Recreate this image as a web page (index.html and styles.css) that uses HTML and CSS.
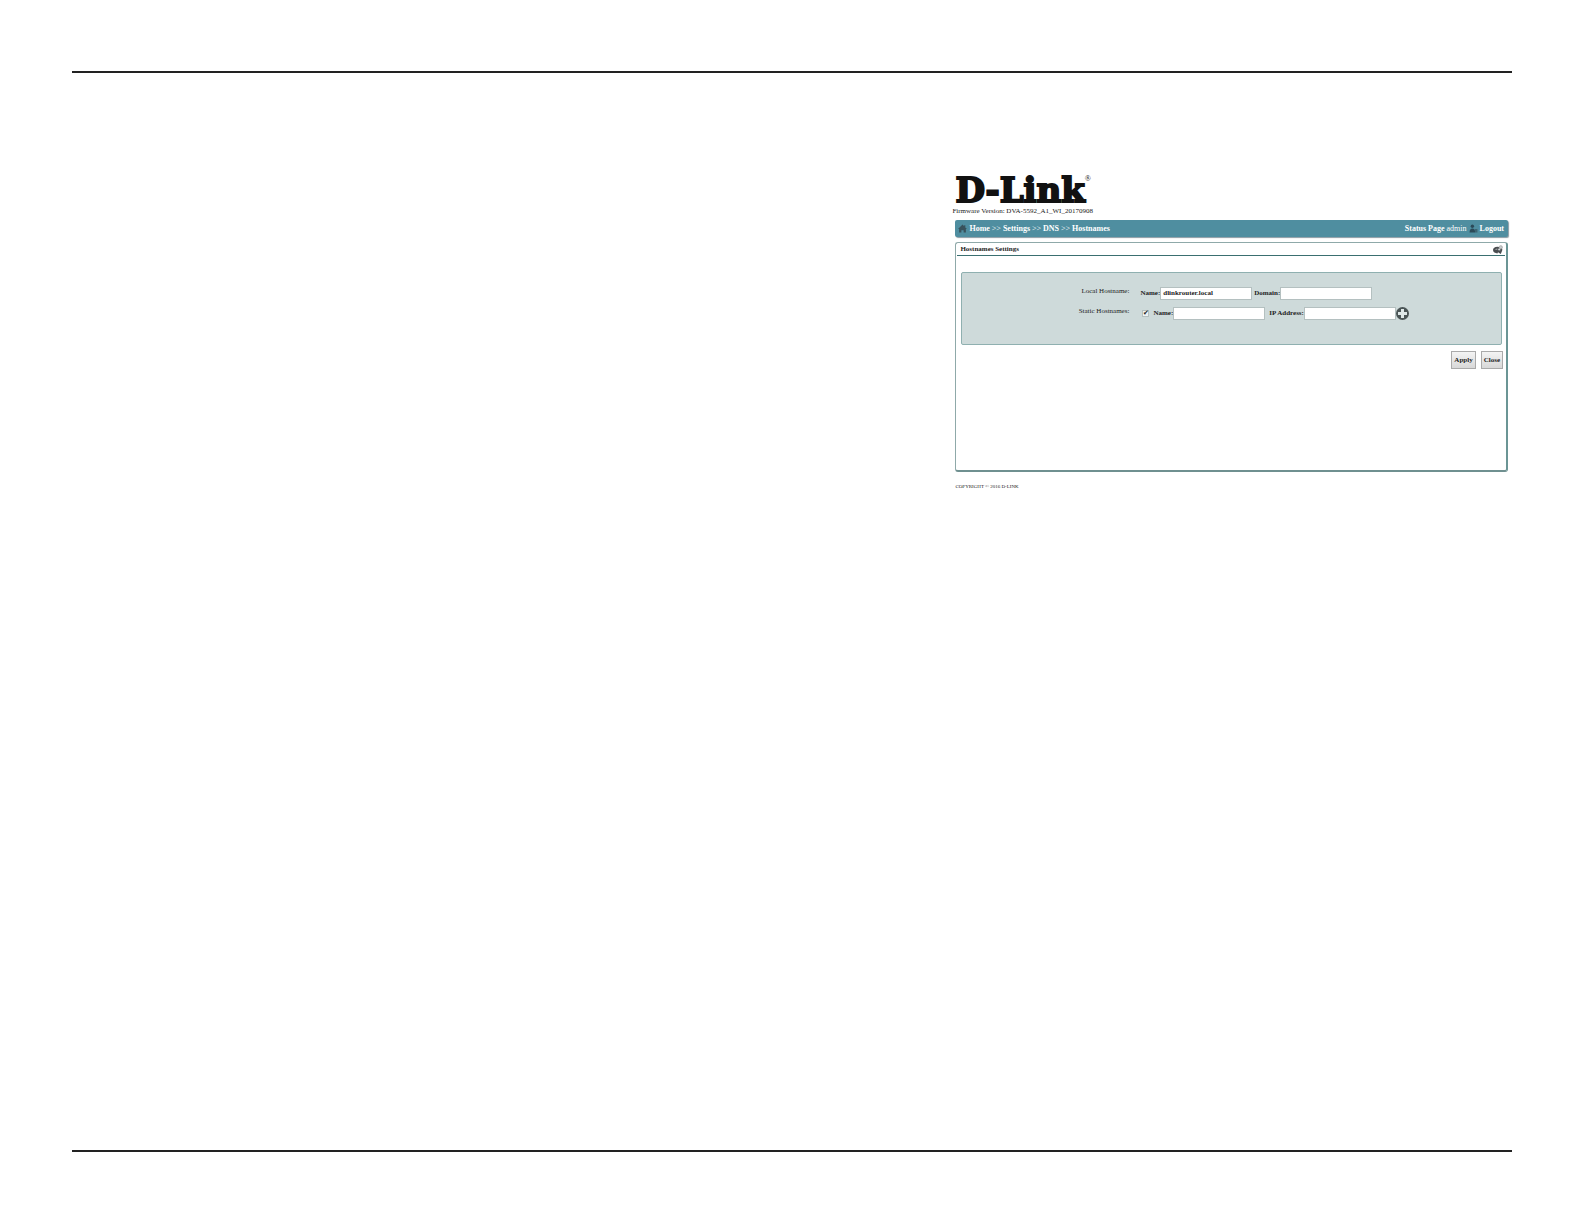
FILE: index.html
```
<!DOCTYPE html>
<html lang="en"><head><meta charset="utf-8"><title>Hostnames Settings</title><meta name="viewport" content="width=device-width, initial-scale=1">
<link rel="stylesheet" href="styles.css">
</head><body>
<main class="sheet">
<div class="screen">
<div class="logo">D-Link<sup>®</sup></div>
<div class="fw">Firmware Version: DVA-5592_A1_WI_20170908</div>
<nav class="bar">
<svg class="ic" viewBox="0 0 16 16"><path d="M8 1L0 9h2v6h4v-4h4v4h4V9h2l-3-3V2h-2v2z" fill="#38525c"/></svg>
<a href="#">Home</a><span>&gt;&gt;</span><a href="#">Settings</a><span>&gt;&gt;</span><a href="#">DNS</a><span>&gt;&gt;</span><a href="#">Hostnames</a>
<div class="user"><a href="#">Status Page</a><span>admin</span>
<svg class="ic" viewBox="0 0 16 16"><circle cx="6" cy="4" r="3" fill="#2b4a58"/><path d="M1 15c0-5 2-7 5-7s5 2 5 7z" fill="#2b4a58"/><path d="M10 9h5v6h-4z" fill="#3d6472"/></svg>
<a href="#">Logout</a></div>
</nav>
<section class="panel">
<div class="title"><h1>Hostnames Settings</h1>
<svg class="ic" viewBox="0 0 18 16"><path d="M8 3C3 3 0 6 0 9c0 4 4 6 8 6l1-2 5 3 2-5c2-3 0-6-2-7z" fill="#4a4d50"/><path d="M4 9c1-3 5-3 6-1l-2 1 5 1V5l-2 1" fill="#d5d8da"/><circle cx="14" cy="4" r="3" fill="#c8cccd" stroke="#999"/></svg></div>
<form>
<div class="box">
<div class="row"><span class="cap">Local Hostname:</span>
<label for="lname">Name:</label><input type="text" id="lname" value="dlinkrouter.local">
<label class="dom" for="domain">Domain:</label><input type="text" id="domain"></div>
<div class="row"><span class="cap">Static Hostnames:</span>
<input type="checkbox" id="on" checked aria-label="Enable static hostname"><label for="sname">Name:</label><input type="text" id="sname">
<label class="ip" for="addr">IP Address:</label><input type="text" id="addr">
<button type="button" class="add" aria-label="Add"><svg viewBox="0 0 26 26"><circle cx="13" cy="13" r="13" fill="#4b5556"/><path d="M10 4h6v6h6v6h-6v6h-6v-6H4v-6h6z" fill="#dfe8e8"/></svg></button></div>
</div>
<div class="btns"><button type="button">Apply</button><button type="button">Close</button></div>
</form>
</section>
<footer>COPYRIGHT © 2016 D-LINK</footer>
</div>
</main>
</body></html>
```

FILE: styles.css
```
*{box-sizing:border-box}
html{font-family:"Liberation Serif","Times New Roman",serif;font-size:7px;line-height:8px;color:#222}
body{margin:0;padding:71px 72px 72px;min-height:100vh;display:flex;background:#fff}
.sheet{flex:1;border-top:2px solid #222;border-bottom:2px solid #222;padding-top:100px}
.screen{width:39%;min-width:559px;margin-left:auto;padding:0 4px 0 5px}
.logo{font:bold 34px/34px "DejaVu Serif",serif;color:#111;-webkit-text-stroke:2px #111;display:flex}
.logo sup{font:8px/8px "Liberation Serif",serif;-webkit-text-stroke:0;padding-top:2px}
.fw{margin-left:-3px}
.bar{display:flex;align-items:center;gap:2px;height:17px;margin-top:5px;padding:0 4px 0 3px;background:#4f8ea0;border-radius:2px;box-shadow:1px 1px 1px #8a9ba3;color:#fff;font-size:8px}
.bar a{color:#fff;font-weight:bold;text-decoration:none}
.user{display:flex;align-items:center;gap:2px;margin-left:auto}
.ic{width:9px;height:9px;flex:none}
.panel{margin-top:5px;min-height:230px;padding:0 4px 0 1px;border:1px solid #8fa9a9;border-right:2px solid #6b9595;border-bottom:2px solid #6f9090;border-radius:3px}
.title{display:flex;align-items:center;justify-content:space-between;height:13px;padding:0 0 0 3px;margin-right:-3px;border-bottom:1px solid #3a6f70}
.title .ic{margin-right:2px;width:10px}
h1{margin:0;font-size:7px}
.box{margin:16px 0 0 4px;height:73px;padding-top:13px;background:#cedada;border:1px solid #8fb0b0;border-radius:2px}
.row{display:flex;align-items:center;height:14px;margin-bottom:6px}
.cap{width:167px;margin-right:11px;padding-bottom:4px;text-align:right}
label{font-weight:bold}
input[type=text]{width:92px;height:13px;padding:0 2px;border:1px solid #b4c0c0;background:#fff;font:bold 7px/8px "Liberation Serif",serif;color:#222;margin:0}
.dom{margin-left:2px}
.ip{margin-left:4px}
input[type=checkbox]{appearance:none;display:flex;align-items:center;justify-content:center;width:7px;height:7px;margin:0 4px 0 2px;background:#eef2f2;border:1px solid #b4c0c0}
input[type=checkbox]:checked::before{content:"✔";font:7px/7px "DejaVu Sans",sans-serif;color:#222}
.add{width:13px;height:13px;padding:0;border:0;background:none}
.add svg{display:block;width:13px;height:13px}
.btns{display:flex;justify-content:flex-end;gap:5px;margin:6px -1px 0 0}
.btns button{height:18px;padding:0 2px;border:1px solid #aaa;background:linear-gradient(#f4f4f4,#d8d8d8);font:bold 7px/8px "Liberation Serif",serif;color:#222}
footer{margin-top:11px;font-size:5px}
```
